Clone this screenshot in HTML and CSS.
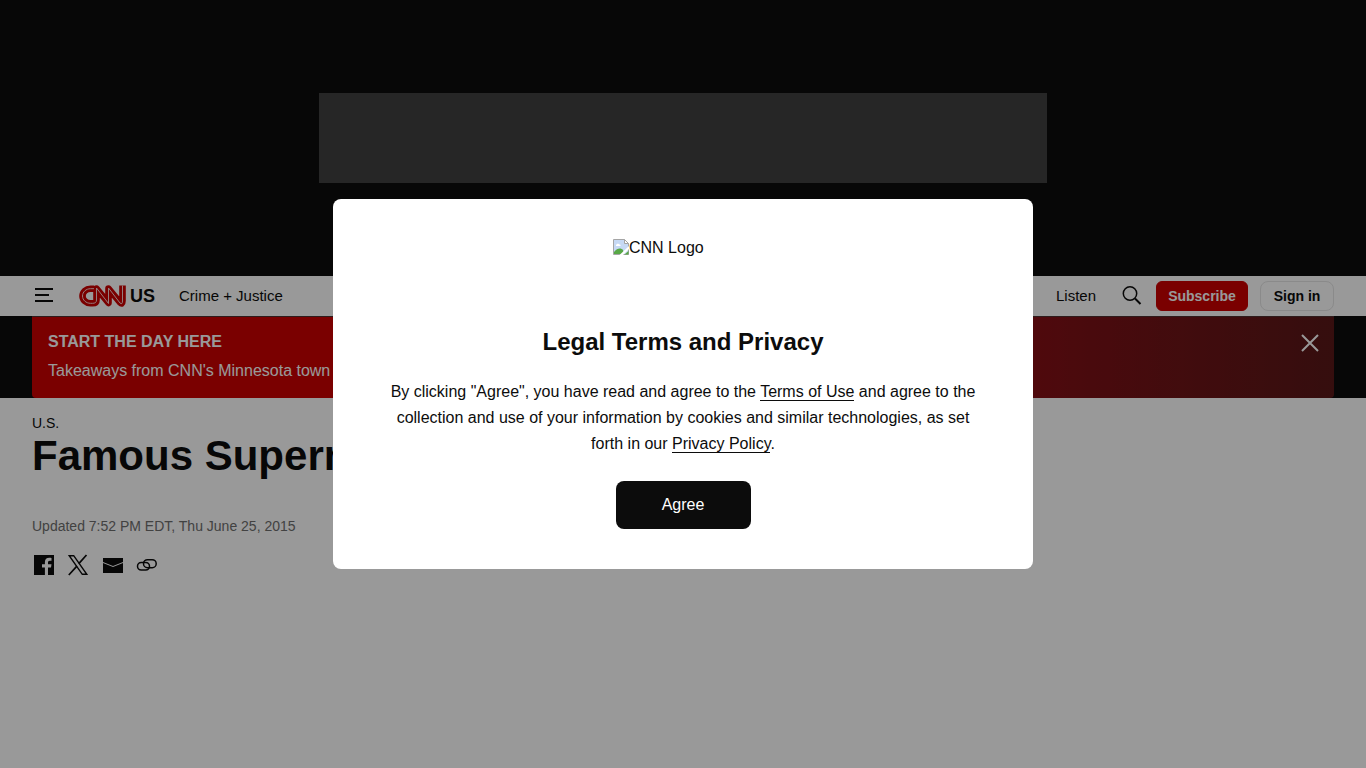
FILE: index.html
```html
<!DOCTYPE html>
<html lang="en">
<head>
    <meta charset="UTF-8">
    <meta name="viewport" content="width=device-width, initial-scale=1.0">
    <title>Famous Supermodels | CNN</title>
    <link rel="stylesheet" href="styles.css">
</head>
<body>
    <div class="ad-wrapper">
        <div class="ad-slot"></div>
    </div>

    <header class="header">
        <button class="icon-button menu-button" type="button" aria-label="Menu">
            <svg width="20" height="16" viewBox="0 0 20 16" fill="none" stroke="currentColor" stroke-width="2">
                <path d="M1 1h18M1 7h14M1 13h18"/>
            </svg>
        </button>
        <a class="brand" href="#" aria-label="CNN US">
            <svg width="48" height="24" viewBox="0 0 48 24" fill="none" stroke-linejoin="round">
                <path d="M15 4.700H11.500C7 4.700 3.500 8 3.500 12S7 19.300 11.500 19.300H13.500C16 19.300 17.500 18.500 17.500 16V4.500L29.500 19V4.500L41 18.500Q43.500 21 43.500 17V1.500" stroke="#cc0000" stroke-width="6.600"/>
                <path d="M15 4.700H11.500C7 4.700 3.500 8 3.500 12S7 19.300 11.500 19.300H13.500C16 19.300 17.500 18.500 17.500 16V4L29.500 19.500V4L41 19Q43.500 21 43.500 17V1.500" stroke="#f7d0d0" stroke-width="1"/>
            </svg>
            <span>US</span>
        </a>
        <nav class="nav">
            <a href="#">Crime + Justice</a>
        </nav>
        <div class="header-actions">
            <a class="listen" href="#">Listen</a>
            <button class="icon-button" type="button" aria-label="Search">
                <svg width="20" height="20" viewBox="0 0 20 20" fill="none" stroke="currentColor" stroke-width="1.500">
                    <circle cx="8" cy="7.500" r="6.700"/>
                    <path d="M13 12.500l5.500 5.500" stroke-width="2"/>
                </svg>
            </button>
            <div class="account">
                <button class="button subscribe" type="button">Subscribe</button>
                <button class="button sign-in" type="button">Sign in</button>
            </div>
        </div>
    </header>

    <div class="banner-wrapper">
        <section class="banner">
            <div>
                <h2>START THE DAY HERE</h2>
                <a href="#">Takeaways from CNN's Minnesota town hall</a>
            </div>
            <button class="icon-button" type="button" aria-label="Close">
                <svg width="18" height="18" viewBox="0 0 18 18" fill="none" stroke="currentColor" stroke-width="2">
                    <path d="M1 1l16 16M17 1L1 17"/>
                </svg>
            </button>
        </section>
    </div>

    <main class="article">
        <a class="section-link" href="#">U.S.</a>
        <h1>Famous Supermodels</h1>
        <p class="timestamp">Updated 7:52 PM EDT, Thu June 25, 2015</p>
        <div class="share">
            <a href="#" aria-label="Facebook">
                <svg width="24" height="24" viewBox="0 0 24 24" fill="currentColor">
                    <path d="M2 2h20v20h-6v-7.500h3l.5-3.200H16V9.500c0-1 .5-1.700 1.800-1.700h1.700V5c-.6-.1-1.500-.2-2.300-.2-2.600 0-4.300 1.500-4.300 4.200v2.300H10v3.200h2.900V22H2z"/>
                </svg>
            </a>
            <a href="#" aria-label="X">
                <svg width="24" height="24" viewBox="0 0 24 24" fill="none" stroke="currentColor">
                    <path d="M3.200 2.700h4.500l13.100 18.600h-4.500z" stroke-width="1.400"/>
                    <path d="M20.500 2l-7.700 8.600M10.900 13.100L2.800 22" stroke-width="1.700"/>
                </svg>
            </a>
            <a href="#" aria-label="Email">
                <svg width="24" height="24" viewBox="0 0 24 24" fill="currentColor">
                    <path d="M3 5h20v4l-10 4L3 9zM3 10l10 4L23 10v10H3z"/>
                </svg>
            </a>
            <a href="#" aria-label="Copy link">
                <svg width="24" height="24" viewBox="0 0 24 24" fill="none" stroke="currentColor" stroke-width="1.500">
                    <rect x="3.500" y="9.500" width="12" height="7.500" rx="3.700"/>
                    <rect x="9.500" y="6.700" width="12.700" height="8" rx="4"/>
                </svg>
            </a>
        </div>
    </main>

    <div class="overlay">
        <div class="modal" role="dialog" aria-modal="true" aria-labelledby="modal-title">
            <div class="modal-logo">
                <svg width="16" height="16" viewBox="0 0 16 16">
                    <path d="M.5.500h11l4 4v11H.5z" fill="#c6d9f5" stroke="#a5a5a5"/>
                    <path d="M11.500.500v4h4z" fill="#fff" stroke="#a5a5a5"/>
                    <path d="M3 6.500C3 4.500 6 4 6.500 5.500C8 5.500 8 7 7 7H3z" fill="#fff"/>
                    <path d="M1 15v-2c3-4 7-4.500 9-2l1 4z" fill="#58a846"/>
                    <path d="M6.500 16L16 7v3l-6 6z" fill="#fff"/>
                    <path d="M11.500 15.500h4V12z" fill="#58a846"/>
                </svg>
                <span>CNN Logo</span>
            </div>
            <h2 id="modal-title">Legal Terms and Privacy</h2>
            <p>By clicking "Agree", you have read and agree to the <a href="#">Terms of Use</a> and agree to the collection and use of your information by cookies and similar technologies, as set forth in our <a href="#">Privacy Policy</a>.</p>
            <button class="agree" type="button">Agree</button>
        </div>
    </div>
</body>
</html>
```
FILE: styles.css
```css
* {
    box-sizing: border-box;
}

body {
    margin: 0;
    font-family: "Liberation Sans", Arial, sans-serif;
    font-size: 16px;
    color: #0c0c0c;
    background-color: #fff;
}

a {
    color: inherit;
    text-decoration: none;
}

button {
    font-family: inherit;
    cursor: pointer;
}

svg {
    display: block;
}

/* Top ad */
.ad-wrapper {
    display: flex;
    justify-content: center;
    padding: 93px 0;
    background-color: #0c0c0c;
}

.ad-slot {
    width: 728px;
    height: 90px;
    background-color: #404040;
}

/* Header */
.header {
    display: flex;
    align-items: center;
    height: 40px;
    padding: 0 32px;
    font-size: 15px;
    line-height: 18px;
}

.icon-button {
    padding: 2px;
    border: none;
    background: none;
    color: inherit;
}

.brand {
    display: flex;
    align-items: center;
    gap: 3px;
    margin: 0 24px 0 23px;
    font-size: 18px;
    font-weight: bold;
}

.header-actions {
    display: flex;
    align-items: center;
    gap: 24px;
    margin-left: auto;
}

.account {
    display: flex;
    gap: 12px;
    margin-left: -12px;
}

.button {
    height: 30px;
    padding: 0;
    border: 1px solid #f0f0f0;
    border-radius: 6px;
    background: none;
    color: #0c0c0c;
    font-size: 14px;
    font-weight: bold;
}

.subscribe {
    width: 92px;
    border-color: #cc0000;
    background-color: #cc0000;
    color: #fff;
}

.sign-in {
    width: 74px;
    border-color: #e6e6e6;
    border-radius: 8px;
}

/* Red banner */
.banner-wrapper {
    padding: 0 32px;
    background-color: #0c0c0c;
}

.banner {
    display: flex;
    justify-content: space-between;
    align-items: flex-start;
    padding: 15px 13px 16px 16px;
    border-top: 1px solid #4d3030;
    border-radius: 0 0 4px 4px;
    background: linear-gradient(to right, #cc0000 50%, #7d1117 80%, #591818);
    color: #fff;
}

.banner h2 {
    margin: 0 0 8px;
    font-size: 16px;
    line-height: 20px;
}

.banner a {
    display: block;
    line-height: 22px;
}

/* Article */
.article {
    padding: 16px 32px;
}

.section-link {
    display: block;
    font-size: 14px;
    line-height: 18px;
}

h1 {
    margin: 0 0 36px;
    font-size: 42px;
    line-height: 48px;
}

.timestamp {
    margin: 0 0 17px;
    color: #6e6e6e;
    font-size: 14px;
    line-height: 20px;
}

.share {
    display: flex;
    gap: 10px;
}

/* Terms dialog */
.overlay {
    position: fixed;
    inset: 0;
    display: flex;
    align-items: center;
    justify-content: center;
    background-color: rgba(0, 0, 0, 0.4);
}

.modal {
    width: 100%;
    max-width: 700px;
    padding: 40px 50px;
    border-radius: 8px;
    background-color: #fff;
    text-align: center;
}

.modal-logo {
    display: flex;
    width: 140px;
    height: 65px;
    margin: 0 auto 24px;
}

.modal h2 {
    margin: 0 0 24px;
    font-size: 24px;
    line-height: 27px;
}

.modal p {
    margin: 0 0 24px;
    line-height: 26px;
}

.modal p a {
    border-bottom: 1px solid #0c0c0c;
}

.agree {
    display: block;
    width: 135px;
    height: 48px;
    margin: 0 auto;
    border: none;
    border-radius: 8px;
    background-color: #0c0c0c;
    color: #fff;
    font-size: 16px;
}
```
